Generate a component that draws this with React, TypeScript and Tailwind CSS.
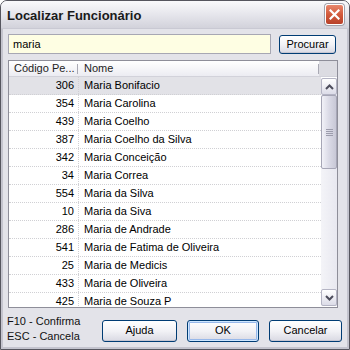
import React from "react"

const rows = [
  ["306", "Maria Bonifacio"],
  ["354", "Maria Carolina"],
  ["439", "Maria Coelho"],
  ["387", "Maria Coelho da Silva"],
  ["342", "Maria Conceição"],
  ["34", "Maria Correa"],
  ["554", "Maria da Silva"],
  ["10", "Maria da Siva"],
  ["286", "Maria de Andrade"],
  ["541", "Maria de Fatima de Oliveira"],
  ["25", "Maria de Medicis"],
  ["433", "Maria de Oliveira"],
  ["425", "Maria de Souza P"],
]

function XpButton({ label, def, className }: { label: string; def?: boolean; className?: string }) {
  return (
    <div
      className={
        "flex items-center justify-center rounded-[3px] border border-[#003c74] bg-gradient-to-b from-white via-[#f2f2f6] to-[#d9d9e3] " +
        (def ? "shadow-[inset_0_0_0_1px_#cee7ff,inset_0_0_0_2px_#98b8ea] " : "shadow-[inset_0_-1px_0_#c6c6d2] ") +
        (className ?? "")
      }
    >
      {label}
    </div>
  )
}

function ScrollBtn({ up }: { up?: boolean }) {
  return (
    <div className="h-[17px] rounded-[2px] border border-[#b4b4c4] bg-gradient-to-b from-white to-[#dcdce8] flex items-center justify-center">
      <svg width="9" height="6" viewBox="0 0 9 6">
        <path
          d={up ? "M1 5 L4.5 1.5 L8 5" : "M1 1 L4.5 4.5 L8 1"}
          fill="none"
          stroke="#4d4d5c"
          strokeWidth="2"
        />
      </svg>
    </div>
  )
}

export default function App() {
  return (
    <div className="w-[350px] h-[350px] flex flex-col overflow-hidden rounded-t-[7px] border border-[#56565f] bg-[#e3e3e9] font-['Liberation_Sans',Arial,sans-serif] text-[11px] text-black">
      {/* title bar */}
      <div className="h-[28px] flex items-center justify-between pl-[6px] pr-[5px] bg-gradient-to-b from-[#fafafc] via-[#e6e6ec] to-[#d2d2db] border-b border-[#c9c9d3]">
        <span className="text-[13px] font-bold text-[#1a1a1a] mt-[2px]">Localizar Funcionário</span>
        <div className="w-[19px] h-[21px] rounded-[3px] border border-white bg-gradient-to-b from-[#e8866c] via-[#d25a3c] to-[#b8412a] shadow-[0_0_0_1px_#a0a0aa] flex items-center justify-center">
          <svg width="11" height="11" viewBox="0 0 11 11">
            <path d="M1.5 1.5 L9.5 9.5 M9.5 1.5 L1.5 9.5" stroke="white" strokeWidth="2.2" strokeLinecap="square" />
          </svg>
        </div>
      </div>

      <div className="flex-1 flex flex-col border-x-2 border-b-2 border-[#c4c4ce]">
        {/* search */}
        <div className="flex items-center mt-[5px] pl-[5px]">
          <div className="w-[263px] h-[20px] border border-[#a7a7b3] bg-[#fefee3] flex items-center pl-[4px]">maria</div>
          <XpButton label="Procurar" className="ml-[8px] w-[57px] h-[19px]" />
        </div>

        {/* grid */}
        <div className="ml-[5px] mt-[6px] w-[330px] h-[248px] border border-[#8e8e99] bg-white flex flex-col">
          <div className="h-[16px] flex items-center bg-gradient-to-b from-white to-[#ececf2] border-b border-[#d2d2da]">
            <div className="w-[68px] pl-[5px] whitespace-nowrap text-[#222]">Código Pe...</div>
            <div className="w-px h-[10px] bg-[#a9a9b4]" />
            <div className="w-[240px] pl-[6px] text-[#222]">Nome</div>
            <div className="w-px h-[10px] bg-[#a9a9b4]" />
            <div className="flex-1 h-full bg-[#dcdce2]" />
          </div>
          <div className="flex-1 flex overflow-hidden">
            <div className="flex-1 overflow-hidden">
              {rows.map(([code, name], i) => (
                <div
                  key={code}
                  className={
                    "h-[18px] flex items-center border-b border-dotted border-[#d0d0d4] " +
                    (i === 0 ? "bg-[#e2e2e7]" : "")
                  }
                >
                  <div className="w-[70px] h-full flex items-center justify-end pr-[4px] border-r border-dotted border-[#d0d0d4]">
                    {code}
                  </div>
                  <div className="pl-[5px] whitespace-nowrap">{name}</div>
                </div>
              ))}
            </div>
            <div className="w-[16px] flex flex-col bg-gradient-to-r from-[#f4f4f8] to-[#e8e8f0] mt-px mb-px">
              <ScrollBtn up />
              <div className="h-[74px] rounded-[2px] border border-[#a6a6b6] bg-gradient-to-r from-[#f2f2f8] via-[#dadae6] to-[#c8c8d6] flex flex-col items-center justify-center gap-[1px]">
                <div className="w-[7px] h-px bg-[#9c9cac]" />
                <div className="w-[7px] h-px bg-[#9c9cac]" />
                <div className="w-[7px] h-px bg-[#9c9cac]" />
                <div className="w-[7px] h-px bg-[#9c9cac]" />
              </div>
              <div className="flex-1" />
              <ScrollBtn />
            </div>
          </div>
        </div>

        {/* footer */}
        <div className="flex-1 flex items-center pl-[4px] pr-[5px] pt-[3px]">
          <div className="leading-[15px] text-[#111]">
            <div>F10 - Confirma</div>
            <div>ESC - Cancela</div>
          </div>
          <div className="ml-auto mt-[3px] flex gap-[10px]">
            <XpButton label="Ajuda" className="w-[75px] h-[22px]" />
            <XpButton label="OK" def className="w-[72px] h-[22px]" />
            <XpButton label="Cancelar" className="w-[73px] h-[22px]" />
          </div>
        </div>
      </div>
    </div>
  )
}
